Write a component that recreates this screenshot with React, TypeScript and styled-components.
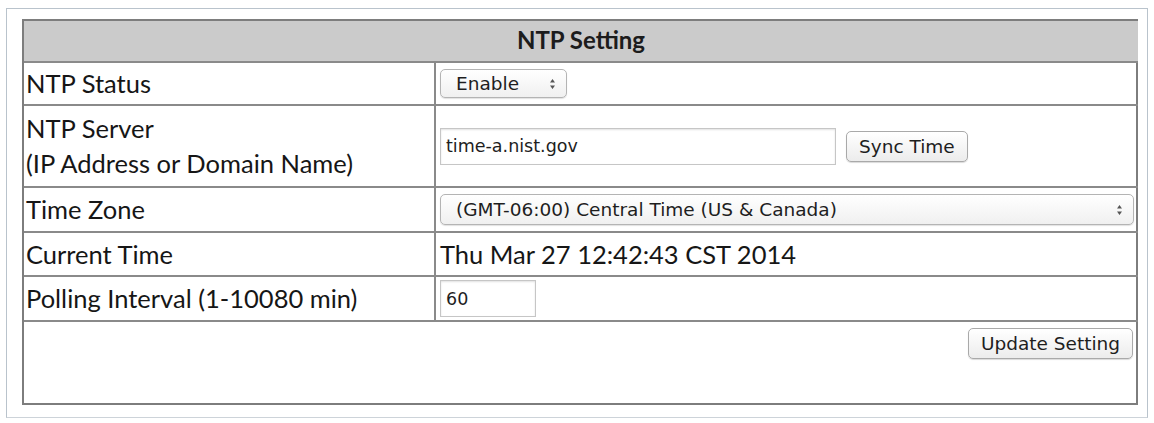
import React from 'react'
import styled, { createGlobalStyle } from 'styled-components'

const Global = createGlobalStyle`
  html, body {
    margin: 0;
    padding: 0;
    background: #fff;
  }
  body {
    font-family: Lato, "Open Sans", sans-serif;
    color: #161616;
  }
`

const Page = styled.div`
  width: 1154px;
  height: 423px;
  padding: 8px 6px 5px 6px;
  box-sizing: border-box;
`

const Frame = styled.div`
  height: 100%;
  box-sizing: border-box;
  border: 1px solid #b9c3cc;
  border-bottom-color: #cdd3d9;
  padding: 10px 9px 12px 15px;
  background: #fff;
`

const Table = styled.div`
  border: 2px solid #7d7d7d;
  display: grid;
  grid-template-columns: 412px 1fr;
  grid-template-rows: 42px 43px 82px 45px 44px 45px 1fr;
  height: 100%;
  box-sizing: border-box;
`

const Header = styled.div`
  grid-column: 1 / 3;
  background: #cbcbcb;
  display: flex;
  align-items: center;
  justify-content: center;
  padding-bottom: 3px;
  font-size: 24px;
  font-weight: 700;
  color: #1c1c1c;
  border-bottom: 2px solid #8a8a8a;
`

const Label = styled.div`
  display: flex;
  flex-direction: column;
  justify-content: center;
  padding: 0 2px;
  font-size: 25.5px;
  line-height: 35px;
  border-right: 2px solid #8a8a8a;
  border-bottom: 2px solid #8a8a8a;
`

const Cell = styled.div`
  display: flex;
  align-items: center;
  gap: 10px;
  padding: 0 4px;
  font-size: 25.5px;
  border-bottom: 2px solid #8a8a8a;
`

const Footer = styled.div`
  grid-column: 1 / 3;
  display: flex;
  justify-content: flex-end;
  align-items: flex-start;
  padding: 6px 5px 0 0;
`

const Control = styled.div<{ $w: string; $h?: number }>`
  width: ${(p) => p.$w};
  height: ${(p) => p.$h ?? 29}px;
  box-sizing: border-box;
  display: flex;
  align-items: center;
  justify-content: space-between;
  font-family: "DejaVu Sans", "Open Sans", sans-serif;
  font-size: 18px;
  color: #1e1e1e;
`

const SelectBox = styled(Control)`
  border: 1px solid #b4b4b4;
  border-radius: 5px;
  background: linear-gradient(#ffffff, #f0f0f0);
  box-shadow: 0 1px 1px rgba(0, 0, 0, 0.12);
  padding: 0 10px 0 15px;
  font-size: 18.5px;
`

const TextBox = styled(Control)`
  border: 1px solid #c6c6c6;
  box-shadow: inset 0 1px 2px rgba(0, 0, 0, 0.12);
  background: #fff;
  padding: 0 5px;
  justify-content: flex-start;
  font-size: 17.5px;
`

const Button = styled(Control)`
  width: auto;
  border: 1px solid #a9a9a9;
  border-radius: 5px;
  background: linear-gradient(#ffffff, #ececec);
  box-shadow: 0 1px 1px rgba(0, 0, 0, 0.15);
  padding: 0 12px;
  justify-content: center;
  font-size: 18.5px;
`

const Arrows = () => (
  <svg width="7" height="12" viewBox="0 0 7 12">
    <path d="M3.5 1 L6 4.5 H1 Z M3.5 11 L6 7.5 H1 Z" fill="#555" />
  </svg>
)

export default function App() {
  return (
    <>
      <Global />
      <Page>
        <Frame>
          <Table>
            <Header>NTP Setting</Header>

            <Label>NTP Status</Label>
            <Cell>
              <SelectBox $w="127px" $h={29}>
                Enable <Arrows />
              </SelectBox>
            </Cell>

            <Label>
              <span>NTP Server</span>
              <span>(IP Address or Domain Name)</span>
            </Label>
            <Cell>
              <TextBox $w="396px" $h={37}>time-a.nist.gov</TextBox>
              <Button $w="auto" $h={31}>Sync Time</Button>
            </Cell>

            <Label>Time Zone</Label>
            <Cell>
              <SelectBox $w="694px" $h={31}>
                (GMT-06:00) Central Time (US &amp; Canada) <Arrows />
              </SelectBox>
            </Cell>

            <Label>Current Time</Label>
            <Cell>Thu Mar 27 12:42:43 CST 2014</Cell>

            <Label>Polling Interval (1-10080 min)</Label>
            <Cell>
              <TextBox $w="96px" $h={37}>60</TextBox>
            </Cell>

            <Footer>
              <Button $w="auto" $h={31}>Update Setting</Button>
            </Footer>
          </Table>
        </Frame>
      </Page>
    </>
  )
}
